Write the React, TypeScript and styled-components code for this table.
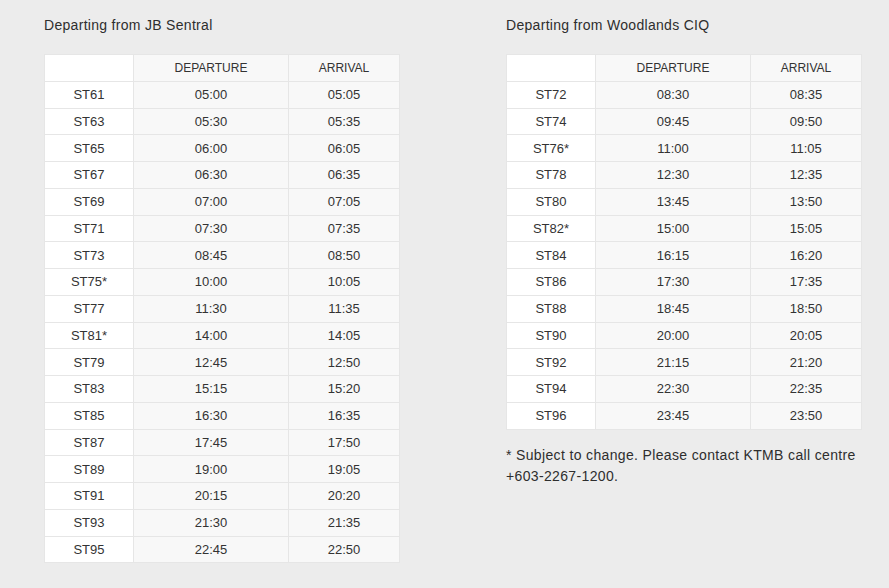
import React from 'react';
import styled, { createGlobalStyle } from 'styled-components';

type Trip = [string, string, string];

const fromJB: Trip[] = [
  ['ST61', '05:00', '05:05'],
  ['ST63', '05:30', '05:35'],
  ['ST65', '06:00', '06:05'],
  ['ST67', '06:30', '06:35'],
  ['ST69', '07:00', '07:05'],
  ['ST71', '07:30', '07:35'],
  ['ST73', '08:45', '08:50'],
  ['ST75*', '10:00', '10:05'],
  ['ST77', '11:30', '11:35'],
  ['ST81*', '14:00', '14:05'],
  ['ST79', '12:45', '12:50'],
  ['ST83', '15:15', '15:20'],
  ['ST85', '16:30', '16:35'],
  ['ST87', '17:45', '17:50'],
  ['ST89', '19:00', '19:05'],
  ['ST91', '20:15', '20:20'],
  ['ST93', '21:30', '21:35'],
  ['ST95', '22:45', '22:50'],
];

const fromWoodlands: Trip[] = [
  ['ST72', '08:30', '08:35'],
  ['ST74', '09:45', '09:50'],
  ['ST76*', '11:00', '11:05'],
  ['ST78', '12:30', '12:35'],
  ['ST80', '13:45', '13:50'],
  ['ST82*', '15:00', '15:05'],
  ['ST84', '16:15', '16:20'],
  ['ST86', '17:30', '17:35'],
  ['ST88', '18:45', '18:50'],
  ['ST90', '20:00', '20:05'],
  ['ST92', '21:15', '21:20'],
  ['ST94', '22:30', '22:35'],
  ['ST96', '23:45', '23:50'],
];

const GlobalStyle = createGlobalStyle`
  html, body {
    margin: 0;
    background: #ececec;
  }
  body {
    font-family: "Liberation Sans", Arial, sans-serif;
    color: #333;
  }
`;

const Schedule = ({ title, trips, note }: { title: string; trips: Trip[]; note?: string }) => (
  <Column>
    <Title>{title}</Title>
    <Table>
      <colgroup>
        <col style={{ width: 89 }} />
        <col style={{ width: 155 }} />
        <col />
      </colgroup>
      <thead>
        <tr>
          <Cell first />
          <HeadCell>DEPARTURE</HeadCell>
          <HeadCell>ARRIVAL</HeadCell>
        </tr>
      </thead>
      <tbody>
        {trips.map(([train, dep, arr]) => (
          <tr key={train}>
            <Cell first>{train}</Cell>
            <Cell>{dep}</Cell>
            <Cell>{arr}</Cell>
          </tr>
        ))}
      </tbody>
    </Table>
    {note && <Note>{note}</Note>}
  </Column>
);

const App = () => (
  <>
    <GlobalStyle />
    <Page>
      <Schedule title="Departing from JB Sentral" trips={fromJB} />
      <Schedule
        title="Departing from Woodlands CIQ"
        trips={fromWoodlands}
        note="* Subject to change. Please contact KTMB call centre +603-2267-1200."
      />
    </Page>
  </>
);

export default App;

const Page = styled.div`
  display: grid;
  grid-template-columns: 356px 356px;
  column-gap: 106px;
  align-items: start;
  padding: 17px 0 26px 44px;
  min-height: 588px;
  box-sizing: border-box;
`;

const Column = styled.section`
  display: flex;
  flex-direction: column;
`;

const Title = styled.h2`
  margin: 0 0 20px;
  height: 17px;
  font-size: 14px;
  font-weight: normal;
  line-height: 17px;
  letter-spacing: 0.3px;
  color: #2e2e2e;
`;

const Table = styled.table`
  width: 356px;
  border-collapse: collapse;
  table-layout: fixed;
  border: 1px solid #e3e3e3;

  tr {
    height: 26.76px;
  }
`;

const Cell = styled.td<{ first?: boolean }>`
  padding: 0;
  border: 1px solid #e6e6e6;
  background: ${props => (props.first ? '#ffffff' : '#f8f8f8')};
  text-align: center;
  font-size: 13px;
  color: #333;
`;

const HeadCell = styled.th`
  padding: 0;
  border: 1px solid #e6e6e6;
  background: #f8f8f8;
  text-align: center;
  font-size: 12px;
  font-weight: normal;
  color: #333;
`;

const Note = styled.p`
  margin: 15px 0 0;
  font-size: 14px;
  line-height: 21px;
  letter-spacing: 0.35px;
  color: #2e2e2e;
`;
